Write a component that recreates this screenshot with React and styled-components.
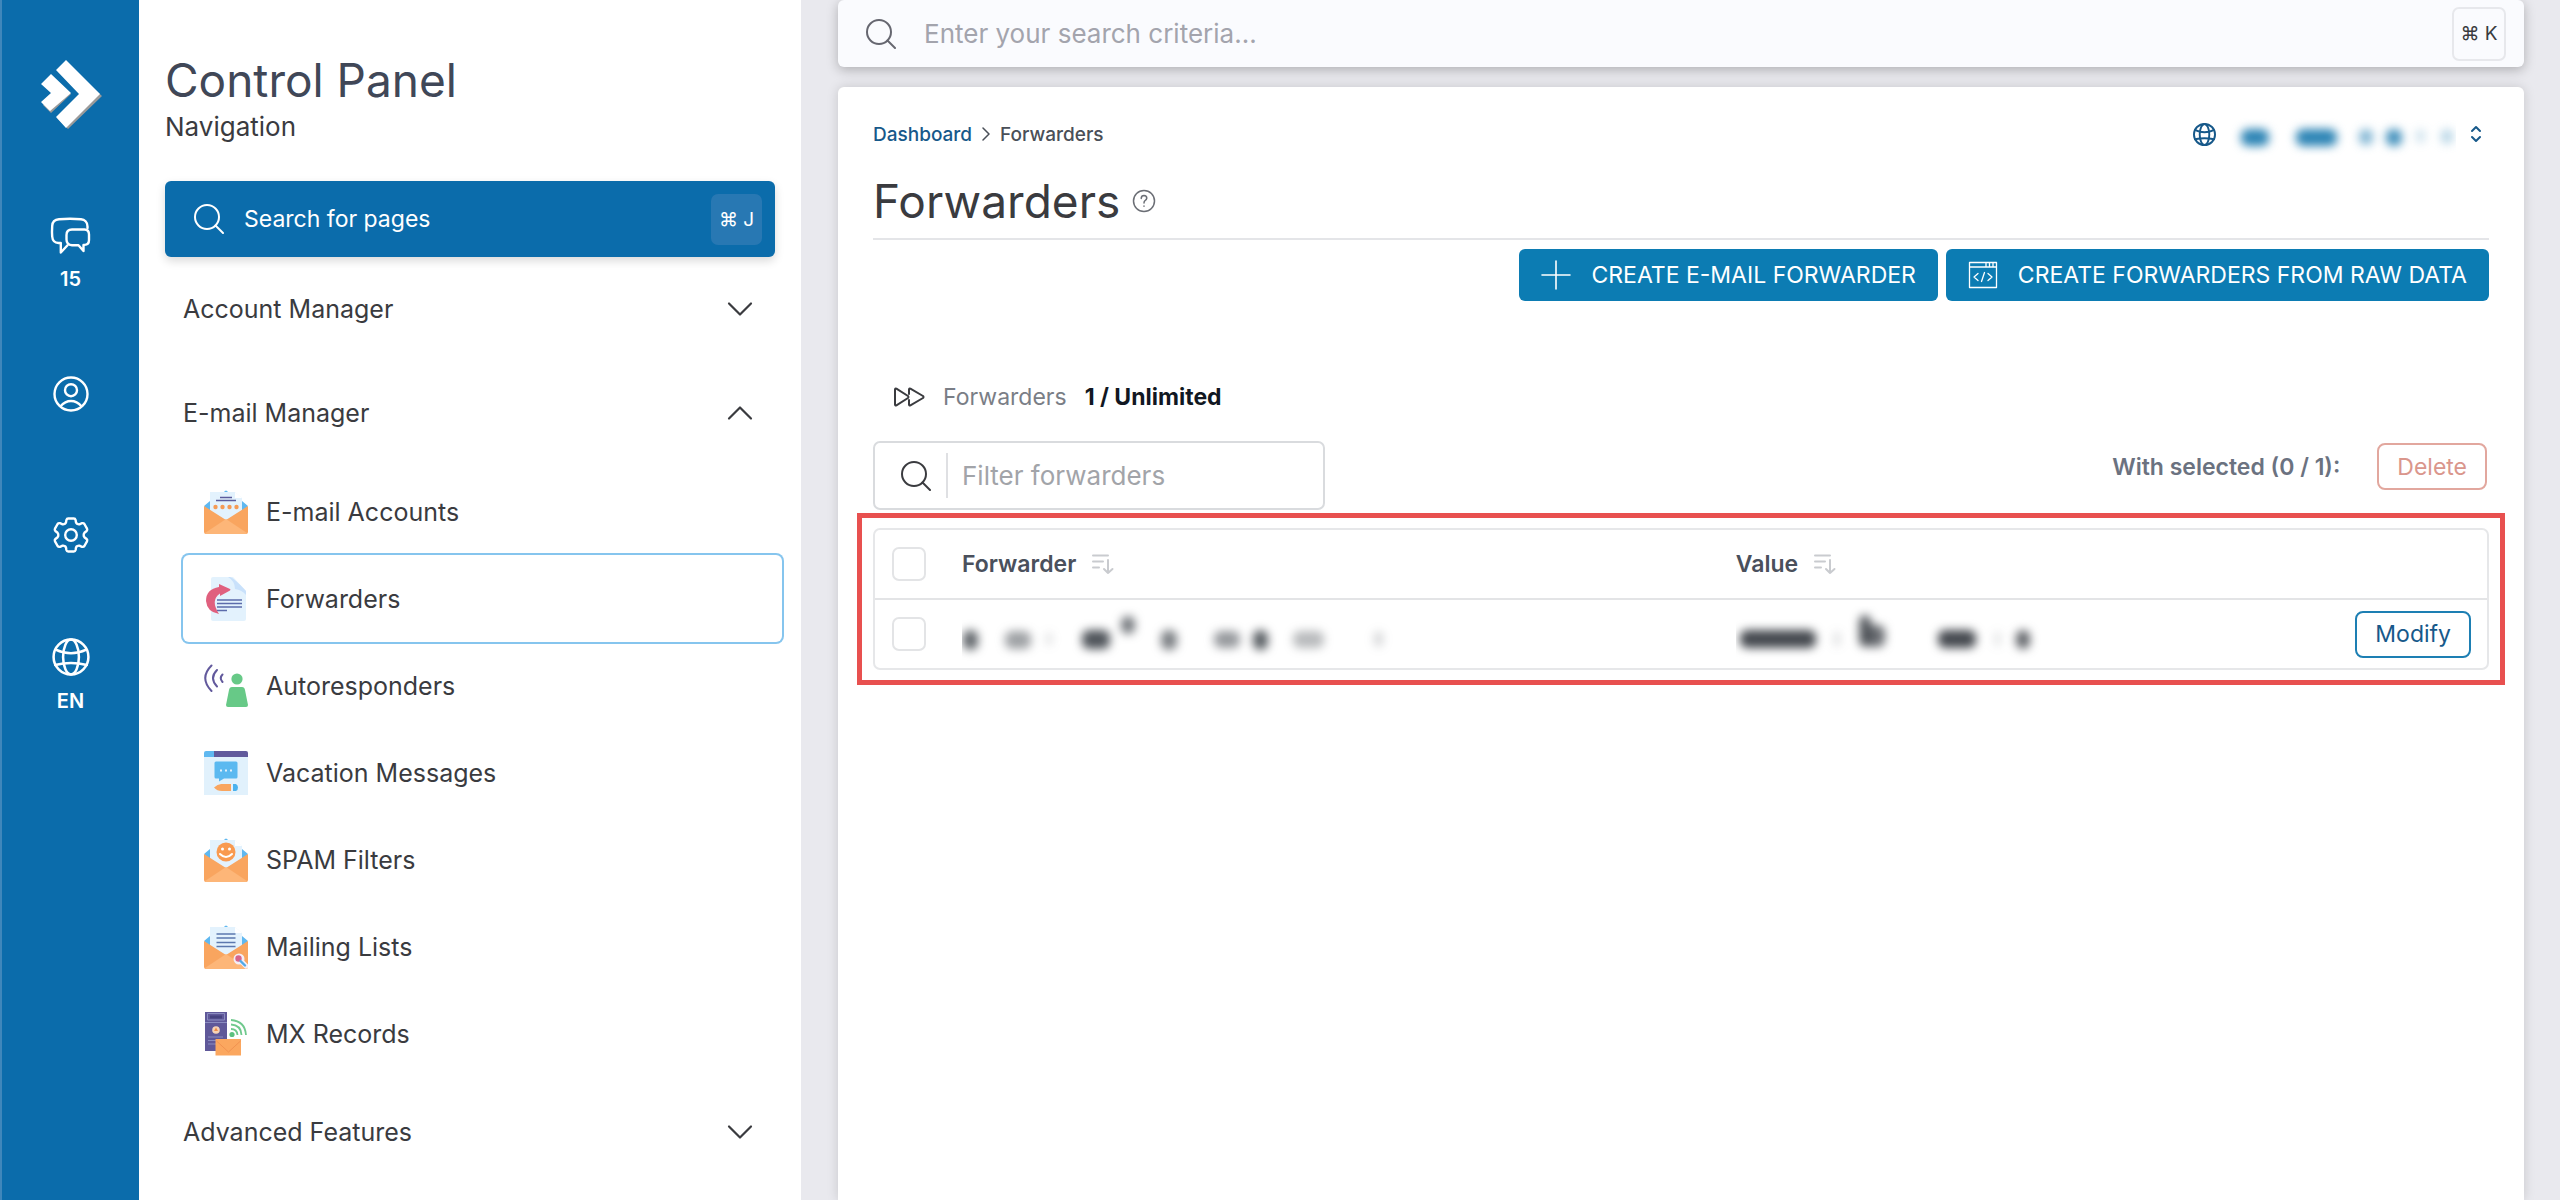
import React, { useState } from 'react'
import styled, { createGlobalStyle } from 'styled-components'

const GlobalStyle = createGlobalStyle`
    * {
        box-sizing: border-box;
    }

    body {
        margin: 0;
        background: #e9e9ee;
        color: #3a3b3f;
        font-family: Inter, 'Open Sans', sans-serif;
        font-size: 23px;
    }

    button, input {
        font-family: inherit;
        font-size: inherit;
        color: inherit;
    }

    button {
        padding: 0;
        border: none;
        background: none;
        cursor: pointer;
    }

    a {
        color: inherit;
        text-decoration: none;
    }

    svg {
        display: block;
        flex: none;
    }
`

// line icons

const Line = ({ size = 30, width, height, box = '0 0 30 30', stroke = 2, children }) => (
    <svg width={width || size} height={height || size} viewBox={box} fill="none" stroke="currentColor"
        strokeWidth={stroke} strokeLinecap="round" strokeLinejoin="round" aria-hidden="true">
        {children}
    </svg>
)

const SearchIcon = () => (
    <Line>
        <circle cx="13" cy="13" r="12" />
        <path d="M21.5 21.5L29 29" />
    </Line>
)

const GlobeIcon = ({ size, stroke }) => (
    <Line size={size} stroke={stroke} box="0 0 36 36">
        <circle cx="18" cy="18" r="16.5" />
        <ellipse cx="18" cy="18" rx="7.5" ry="16.5" />
        <path d="M3.5 11Q18 18 32.5 11M3 25.5Q18 22 33 25.5" />
    </Line>
)

const ChatIcon = () => (
    <Line width={42} height={38} box="0 0 42 38" stroke="2.4">
        <path d="M37.5 12V10.5C37.5 6 34.5 3.6 31 3.3Q20 2.3 9 3.3C5 3.6 2.4 6 2.2 10Q1.8 16 2.2 20.5C2.5 24.5 5 26.8 8.5 27H10.8V36.5L17.5 29.3" />
        <path d="M22 13.5H34.5C37.6 13.5 39 15.5 39 18.5V24C39 27 37.6 28.7 34.5 28.9H33.5V35L28.5 29.3H22C18.5 29 16.5 27 16.5 23.5V19C16.5 15.5 18.5 13.5 22 13.5Z" />
    </Line>
)

const UserIcon = () => (
    <Line size={36} box="0 0 36 36" stroke="2.4">
        <circle cx="18" cy="18" r="16.5" />
        <circle cx="18" cy="14.2" r="6" />
        <path d="M7.5 30.2Q12 25 18 25T28.5 30.2" />
    </Line>
)

const GearIcon = () => (
    <Line size={38} box="-19 -19 38 38" stroke="2.4">
        <path d="M-2.8 -16.5H2.8Q4.2 -16.5 4.6 -15L5 -12.6Q5.3 -11.6 6.2 -11.2Q7.4 -10.4 8.4 -10.7L11 -11.8Q12.6 -12.2 13.4 -11L16 -6.4Q16.7 -5 15.6 -4L13.4 -2.2Q12.6 -1.4 12.7 0Q12.6 1.4 13.4 2.2L15.6 4Q16.7 5 16 6.4L13.4 11Q12.6 12.2 11 11.8L8.4 10.7Q7.4 10.4 6.2 11.2Q5.3 11.6 5 12.6L4.6 15Q4.2 16.5 2.8 16.5H-2.8Q-4.2 16.5 -4.6 15L-5 12.6Q-5.3 11.6 -6.2 11.2Q-7.4 10.4 -8.4 10.7L-11 11.8Q-12.6 12.2 -13.4 11L-16 6.4Q-16.7 5 -15.6 4L-13.4 2.2Q-12.6 1.4 -12.7 0Q-12.6 -1.4 -13.4 -2.2L-15.6 -4Q-16.7 -5 -16 -6.4L-13.4 -11Q-12.6 -12.2 -11 -11.8L-8.4 -10.7Q-7.4 -10.4 -6.2 -11.2Q-5.3 -11.6 -5 -12.6L-4.6 -15Q-4.2 -16.5 -2.8 -16.5Z" />
        <circle r="5.8" />
    </Line>
)

const Chevron = ({ up }) => (
    <Line width={26} height={16} box="0 0 26 16" stroke="2.2">
        <path d={up ? 'M2 13.5L13 2.5L24 13.5' : 'M2 2.5L13 13.5L24 2.5'} />
    </Line>
)

const SortIcon = () => (
    <Line width={24} height={22} box="0 0 24 22" stroke="2">
        <path d="M2 2.5H17M2 8.5H12M2 14.5H8M17 7V20M13 16L17 20L21.5 16" />
    </Line>
)

const FastForwardIcon = () => (
    <Line width={32} height={20} box="0 0 32 20" stroke="2">
        <path d="M2 2.5Q2 1 3.4 1.7L15 9Q16 10 15 11L3.4 18.3Q2 19 2 17.5Z" />
        <path d="M16 7V2.5Q16 1 17.4 1.7L30 9Q31 10 30 11L17.4 18.3Q16 19 16 17.5V13" />
    </Line>
)

const PlusIcon = () => (
    <Line size={30} stroke="1.6">
        <path d="M15 1V29M1 15H29" />
    </Line>
)

const CodeIcon = () => (
    <Line size={30} stroke="1.3">
        <path d="M1.5 2.5H28.5V27.5H1.5ZM1.5 7H28.5M18 2.5V7M21.5 2.5V7M25 2.5V7M10 13.5L6 17L10 20.5M20 13.5L24 17L20 20.5M16.5 12.5L13.5 21.5" />
    </Line>
)

const HelpIcon = () => (
    <Line size={24} box="0 0 24 24" stroke="1.5">
        <circle cx="12" cy="12" r="10.5" />
        <path d="M9.2 9.4Q9.4 6.6 12 6.6Q14.8 6.8 14.8 9.2Q14.6 10.8 13 11.6Q12 12.2 12 14M12 17V17.2" />
    </Line>
)

const Logo = () => (
    <svg width="62" height="72" viewBox="0 0 62 72" aria-hidden="true">
        <g fill="#9a9a9a">
            <path d="M26 4L62 37L28 70L17 59L41 37Z" />
            <path d="M12 17L31 35L11 54L3 46L12 37Z" />
        </g>
        <g fill="#fff">
            <path d="M26 1L60 35L26 69L16 58L39 35L16 11Z" />
            <path d="M11 15L31 34L10 52L1 43L11 34L1 25Z" />
        </g>
    </svg>
)

// coloured menu icons

const Art = ({ children }) => (
    <svg width="44" height="44" viewBox="0 0 44 44" aria-hidden="true">{children}</svg>
)

const Envelope = ({ children }) => (
    <Art>
        <path d="M20 2Q22 -1 24 2ZM0 16L6 11V22ZM44 16L38 11V22Z" fill="#5fb8f0" />
        <path d="M6 2H31L38 8V24L22 34L6 24Z" fill="#e3f2fd" />
        <path d="M31 2V8H38Z" fill="#fff" />
        <path d="M0 16L22 30L44 16V42Q44 44 42 44H2Q0 44 0 42Z" fill="#f9a55f" />
        <path d="M1 43L22 29L43 43Q43 44 42 44H2Z" fill="#fdb678" />
        {children}
    </Art>
)

const AccountsArt = () => (
    <Envelope>
        <path d="M16 7.5H28M12 10.5H32" stroke="#5c5c9c" strokeWidth="1.3" />
        <g fill="#f59a55">
            <circle cx="11.5" cy="17" r="2.2" /><circle cx="18.5" cy="17" r="2.2" />
            <circle cx="25.5" cy="17" r="2.2" /><circle cx="32.5" cy="17" r="2.2" />
        </g>
    </Envelope>
)

const ForwardersArt = () => (
    <Art>
        <path d="M9 0H29L42 14V42Q42 44 40 44H9Q7 44 7 42V2Q7 0 9 0Z" fill="#e3f2fd" />
        <path d="M26 0Q30 1 42 14V18Q38 13 31 12Q31 4 24 0Z" fill="#c9e1fb" />
        <path d="M13 23H38M13 26.5H38M13 30H38M13 33.5H23" stroke="#5c6cab" strokeWidth="1.3" />
        <path d="M15 7L26 12Q27 12.6 26 13.4L16 19V16.5Q6 23 15 37Q3 35 2 24Q2 12 15 10Z" fill="#e0607e" />
    </Art>
)

const AutorespondersArt = () => (
    <Art>
        <path d="M7.5 1.5Q-5 14 7.5 27M13 6Q5 14 13 22.5M18.5 10.5Q15 14 18.5 18" fill="none" stroke="#62599c" strokeWidth="2" strokeLinecap="round" />
        <circle cx="33" cy="15" r="5.6" fill="#67c987" />
        <path d="M28 23H38Q40.5 23 41 26L44 41Q44 43 42 43H24Q22 43 22 41L25 26Q25.5 23 28 23Z" fill="#67c987" />
    </Art>
)

const VacationArt = () => (
    <Art>
        <path d="M0 6H44V44H0Z" fill="#e1f1fc" />
        <path d="M0 2Q0 0 2 0H11V6H0Z" fill="#5fb8f0" />
        <path d="M10 0H42Q44 0 44 2V6H10Z" fill="#615a9c" />
        <path d="M12 10.5H32Q33.5 10.5 33.5 12V26Q33.5 27.5 32 27.5H20L15 30.5V27.5H12Q10.5 27.5 10.5 26V12Q10.5 10.5 12 10.5Z" fill="#5bb9f0" />
        <path d="M16 19.5H18M21 19.5H23M26 19.5H28" stroke="#e1f1fc" strokeWidth="2" />
        <path d="M10 36.5Q14 32.5 18 33H27V40H18Q13 40 10 36.5Z" fill="#f9a55f" />
        <path d="M29 33H32Q34 34 34 36.5T32 40H29Z" fill="#4bb2ee" />
    </Art>
)

const SpamArt = () => (
    <Envelope>
        <circle cx="22" cy="14" r="9.5" fill="#f99a50" />
        <path d="M16 16Q22 22 28 16" fill="none" stroke="#fff" strokeWidth="2" strokeLinecap="round" />
        <circle cx="18.5" cy="11" r="1.5" fill="#fff" />
        <circle cx="25.5" cy="11" r="1.5" fill="#fff" />
    </Envelope>
)

const MailingArt = () => (
    <Envelope>
        <path d="M12.5 9H31.5M12.5 13H31.5M12.5 17.5H31.5M12.5 21.5H31.5" stroke="#5c78ae" strokeWidth="1.5" />
        <circle cx="35" cy="34" r="5.5" fill="#f3eef6" />
        <path d="M37 36L42 41" stroke="#f3eef6" strokeWidth="5" strokeLinecap="round" />
        <circle cx="34.5" cy="33.5" r="3.2" fill="#d7658a" />
        <path d="M36.5 36L41 40.5" stroke="#4fa9e8" strokeWidth="2.4" strokeLinecap="round" />
    </Envelope>
)

const RecordsArt = () => (
    <Art>
        <path d="M1 0H23V39H1Z" fill="#5f5899" />
        <path d="M3.5 1.5H20.5V8H3.5ZM1 10.5H23M4 25H19M4 28.5H12M4 32H12" fill="none" stroke="#8a8cc0" />
        <path d="M6 3.5H18V6.5H6Z" fill="#45427f" />
        <circle cx="12" cy="18" r="3.8" fill="#f6d2b5" />
        <path d="M12 15.5L14 19H10Z" fill="#f08c49" />
        <path d="M27 17Q33 17 33.5 23M27 12.5Q37 13 37.5 23M27 8Q41 9 42 23" fill="none" stroke="#6fc98d" strokeWidth="1.8" />
        <circle cx="28" cy="22.5" r="2.6" fill="#5cc07f" />
        <path d="M11.5 27H37V43.5H11.5Z" fill="#fba75f" />
        <path d="M12.5 29L24.5 40L36.5 29" fill="none" stroke="#f29250" />
    </Art>
)

const sections = [
    { title: 'Account Manager', pages: [] },
    {
        title: 'E-mail Manager',
        pages: [
            { name: 'E-mail Accounts', Icon: AccountsArt },
            { name: 'Forwarders', Icon: ForwardersArt },
            { name: 'Autoresponders', Icon: AutorespondersArt },
            { name: 'Vacation Messages', Icon: VacationArt },
            { name: 'SPAM Filters', Icon: SpamArt },
            { name: 'Mailing Lists', Icon: MailingArt },
            { name: 'MX Records', Icon: RecordsArt },
        ],
    },
    { title: 'Advanced Features', pages: [] },
]

// private values are smudged out: [x, y, width, height, opacity]
const domainMarks = [[11, 23, 28, 17, 1], [66, 23, 41, 17, 1], [129, 23, 14, 16, 0.6], [156, 23, 16, 17, 0.9], [186, 23, 9, 14, 0.25], [211, 23, 12, 15, 0.35]]
const forwarderMarks = [[1, 24, 15, 20, 0.9], [43, 25, 26, 18, 0.55], [84, 26, 6, 14, 0.2], [120, 24, 28, 19, 1], [159, 10, 14, 18, 0.8], [199, 24, 16, 20, 0.75], [252, 25, 26, 17, 0.6], [291, 24, 15, 20, 0.95], [331, 25, 31, 17, 0.4], [412, 25, 9, 16, 0.25]]
const valueMarks = [[4, 24, 76, 18, 1], [98, 25, 6, 16, 0.2], [123, 9, 12, 32, 0.9], [129, 19, 20, 22, 0.8], [202, 24, 38, 18, 1], [259, 25, 5, 16, 0.2], [280, 24, 14, 19, 0.85]]

const Smudge = ({ marks, width, color }) => (
    <svg width={width} height="56" viewBox={`0 0 ${width} 56`} aria-hidden="true">
        <g fill={color} style={{ filter: 'blur(5px)' }}>
            {marks.map(([x, y, w, h, o]) => (
                <rect key={`${x}-${y}`} x={x} y={y} width={w} height={h} rx="7" opacity={o} />
            ))}
        </g>
    </svg>
)

const App = () => {
    const [open, setOpen] = useState('E-mail Manager')

    return (
        <Page>
            <GlobalStyle />
            <Rail>
                <a href="#home" aria-label="Home"><Logo /></a>
                <RailNav>
                    <RailButton aria-label="Messages, 15"><ChatIcon />15</RailButton>
                    <RailButton aria-label="Account" $last><UserIcon /></RailButton>
                    <RailButton aria-label="Settings"><GearIcon /></RailButton>
                    <RailButton aria-label="Language, EN"><GlobeIcon size={38} stroke="2.4" />EN</RailButton>
                </RailNav>
            </Rail>

            <Sidebar>
                <PanelTitle>Control Panel</PanelTitle>
                <PanelSubtitle>Navigation</PanelSubtitle>
                <PageSearch>
                    <SearchIcon />
                    <span>Search for pages</span>
                    <PageKey>⌘ J</PageKey>
                </PageSearch>
                <nav>
                    {sections.map(section => (
                        <Section
                            key={section.title}
                            {...section}
                            open={open === section.title}
                            onToggle={() => setOpen(open === section.title ? null : section.title)}
                        />
                    ))}
                </nav>
            </Sidebar>

            <Main>
                <TopSearch>
                    <SearchIcon />
                    <TopInput type="search" aria-label="Search" placeholder="Enter your search criteria..." />
                    <TopKey>⌘ K</TopKey>
                </TopSearch>
                <Card>
                    <CrumbRow>
                        <Crumbs aria-label="Breadcrumb">
                            <CrumbLink href="#dashboard">Dashboard</CrumbLink>
                            <Line width={8} height={16} box="0 0 8 16" stroke="1.5"><path d="M1 2L7 8L1 14" /></Line>
                            <span>Forwarders</span>
                        </Crumbs>
                        <DomainButton aria-haspopup="listbox" aria-label="Select domain">
                            <GlobeIcon size={23} stroke="3" />
                            <Smudge marks={domainMarks} width={226} color="#2c84b5" />
                            <Line width={12} height={18} box="0 0 12 18" stroke="2"><path d="M2 6L6 2L10 6M2 12L6 16L10 12" /></Line>
                        </DomainButton>
                    </CrumbRow>
                    <Heading>
                        <Title>Forwarders</Title>
                        <HelpButton aria-label="Help"><HelpIcon /></HelpButton>
                    </Heading>
                    <Actions>
                        <PrimaryButton><PlusIcon />CREATE E-MAIL FORWARDER</PrimaryButton>
                        <PrimaryButton><CodeIcon />CREATE FORWARDERS FROM RAW DATA</PrimaryButton>
                    </Actions>
                    <Stats>
                        <FastForwardIcon />
                        <StatName>Forwarders</StatName>
                        <StatValue>1 / Unlimited</StatValue>
                    </Stats>
                    <Toolbar>
                        <Filter>
                            <FilterIcon><SearchIcon /></FilterIcon>
                            <FilterInput type="text" aria-label="Filter forwarders" placeholder="Filter forwarders" />
                        </Filter>
                        <Selected>
                            <SelectedText>With selected (0 / 1):</SelectedText>
                            <OutlineButton $color="#da968c" $border="#e2a79e">Delete</OutlineButton>
                        </Selected>
                    </Toolbar>
                    <Highlight>
                        <TableFrame>
                            <Table>
                                <thead>
                                    <tr>
                                        <CheckCell as="th"><Checkbox type="checkbox" aria-label="Select all" /></CheckCell>
                                        <HeadCell $width="48%"><HeadButton>Forwarder<SortIcon /></HeadButton></HeadCell>
                                        <HeadCell><HeadButton>Value<SortIcon /></HeadButton></HeadCell>
                                        <HeadCell $width="150px" aria-label="Actions" />
                                    </tr>
                                </thead>
                                <tbody>
                                    <tr>
                                        <CheckCell><Checkbox type="checkbox" aria-label="Select forwarder" /></CheckCell>
                                        <Cell><Smudge marks={forwarderMarks} width={440} color="#50555b" /></Cell>
                                        <Cell><Smudge marks={valueMarks} width={310} color="#45494f" /></Cell>
                                        <ActionCell><OutlineButton $color="#17598a" $border="#1d7fb3">Modify</OutlineButton></ActionCell>
                                    </tr>
                                </tbody>
                            </Table>
                        </TableFrame>
                    </Highlight>
                </Card>
            </Main>
        </Page>
    )
}

const Section = ({ title, pages, open, onToggle }) => (
    <>
        <SectionButton aria-expanded={open} onClick={onToggle}>
            {title}
            <Chevron up={open} />
        </SectionButton>
        {open && (
            <PageList>
                {pages.map(({ name, Icon }) => (
                    <li key={name}>
                        <PageLink href="#page" $active={name === 'Forwarders'}>
                            <Icon />
                            {name}
                        </PageLink>
                    </li>
                ))}
            </PageList>
        )}
    </>
)

const Page = styled.div`
    display: flex;
    min-height: 100vh;
`

const Rail = styled.aside`
    flex: none;
    width: 139px;
    padding-top: 59px;

    display: flex;
    flex-direction: column;
    align-items: center;

    background: #0b6cab;
    border-left: 2px solid #3f87bb;
    color: #fff;
`

const RailNav = styled.nav`
    margin-top: 85px;

    display: flex;
    flex-direction: column;
    align-items: center;
    gap: 84px;
`

const RailButton = styled.button`
    margin-bottom: ${props => props.$last ? '20px' : '0'};

    display: flex;
    flex-direction: column;
    align-items: center;
    gap: 12px;

    font-size: 20px;
    font-weight: 600;
    line-height: 26px;
`

const Sidebar = styled.aside`
    flex: none;
    width: 662px;
    padding: 52px 26px 0 26px;

    background: #fff;
`

const PanelTitle = styled.h2`
    margin: 0;

    color: #404757;
    font-size: 46px;
    font-weight: 400;
    line-height: 56px;
`

const PanelSubtitle = styled.div`
    margin-bottom: 35px;

    font-size: 26px;
    line-height: 38px;
`

const PageSearch = styled.button`
    width: 100%;
    height: 76px;
    padding: 0 13px 0 29px;

    display: flex;
    align-items: center;
    gap: 20px;

    background: #0b6cab;
    border-radius: 6px;
    box-shadow: 0 4px 10px rgba(0, 0, 0, 0.15);
    color: #fff;
`

const Key = styled.kbd`
    margin-left: auto;

    display: flex;
    align-items: center;
    justify-content: center;

    border-radius: 7px;
    font-family: inherit;
    font-size: 19px;
`

const PageKey = styled(Key)`
    width: 51px;
    height: 51px;
    background: #2878b3;
`

const TopKey = styled(Key)`
    width: 54px;
    height: 54px;
    border: 2px solid #e7e8ec;
    color: #3a3b3f;
`

const SectionButton = styled.button`
    width: 100%;
    height: 104px;
    padding: 0 22px 0 18px;

    display: flex;
    align-items: center;
    justify-content: space-between;

    font-size: 25px;
`

const PageList = styled.ul`
    margin: 0;
    padding: 3px 0 3px 18px;
    list-style: none;
`

const PageLink = styled.a`
    height: 87px;
    margin-right: -7px;
    padding-left: 21px;

    display: flex;
    align-items: center;
    gap: 18px;

    border-radius: 6px;
    box-shadow: ${props => props.$active ? '0 0 0 2px #86c5ee' : 'none'};
    font-size: 25px;
`

const Main = styled.main`
    flex: 1;
    min-width: 0;
    padding: 0 36px 0 37px;

    display: flex;
    flex-direction: column;
    gap: 20px;
`

const TopSearch = styled.div`
    height: 67px;
    padding: 0 18px 0 28px;

    display: flex;
    align-items: center;
    gap: 28px;

    background: #fafbfe;
    border-radius: 6px;
    box-shadow: 0 3px 12px rgba(0, 0, 0, 0.25);
    color: #666770;
`

const TopInput = styled.input`
    flex: 1;
    padding: 0;

    background: none;
    border: none;
    font-size: 26px;

    &::placeholder {
        color: #a3a4ad;
    }
`

const Card = styled.section`
    flex: 1;
    padding: 32px 35px;

    background: #fff;
    border-radius: 6px 6px 0 0;
    box-shadow: 0 0 12px rgba(0, 0, 0, 0.15);
`

const CrumbRow = styled.div`
    height: 30px;

    display: flex;
    align-items: center;
    justify-content: space-between;
`

const Crumbs = styled.nav`
    display: flex;
    align-items: center;
    gap: 10px;

    color: #4a4f58;
    font-size: 19px;
    font-weight: 500;
`

const CrumbLink = styled.a`
    color: #17598a;
`

const DomainButton = styled.button`
    padding-right: 7px;

    display: flex;
    align-items: center;
    gap: 14px;

    color: #17598a;
`

const Heading = styled.div`
    margin-top: 26px;
    padding-bottom: 11px;

    display: flex;
    align-items: center;
    gap: 12px;

    border-bottom: 2px solid #e4e5e8;
`

const Title = styled.h1`
    margin: 0;

    font-size: 46px;
    font-weight: 400;
    line-height: 52px;
`

const HelpButton = styled.button`
    color: #6b6e75;
`

const Actions = styled.div`
    margin-top: 9px;

    display: flex;
    justify-content: flex-end;
    gap: 8px;
`

const PrimaryButton = styled.button`
    height: 52px;
    padding: 0 22px;

    display: flex;
    align-items: center;
    gap: 20px;

    background: #0c7cb3;
    border-radius: 6px;
    color: #fff;
`

const Stats = styled.div`
    margin: 80px 0 28px 20px;
    height: 32px;

    display: flex;
    align-items: center;
    gap: 18px;
`

const StatName = styled.span`
    color: #7a7e86;
`

const StatValue = styled.strong`
    color: #111722;
    font-weight: 700;
`

const Toolbar = styled.div`
    display: flex;
    align-items: flex-start;
    justify-content: space-between;
`

const Filter = styled.div`
    width: 28%;
    height: 69px;
    padding: 10px 14px 10px 26px;

    display: flex;

    border: 2px solid #d9dbde;
    border-radius: 7px;
`

const FilterIcon = styled.div`
    padding-right: 15px;

    display: flex;
    align-items: center;

    border-right: 2px solid #dfe0e3;
`

const FilterInput = styled.input`
    flex: 1;
    min-width: 0;
    padding: 0 14px;

    background: none;
    border: none;
    font-size: 26px;

    &::placeholder {
        color: #a2a4a9;
    }
`

const Selected = styled.div`
    padding: 2px 2px 0 0;

    display: flex;
    align-items: center;
    gap: 37px;
`

const SelectedText = styled.span`
    color: #6b7280;
    font-weight: 600;
`

const OutlineButton = styled.button`
    height: 47px;
    padding: 0 18px;

    background: #fff;
    border: 2px solid ${props => props.$border};
    border-radius: 8px;
    color: ${props => props.$color};
`

const Highlight = styled.div`
    margin: 3px -16px 0 -16px;
    padding: 10px 11px;

    border: 5px solid #e8504f;
`

const TableFrame = styled.div`
    border: 2px solid #e6e7e9;
    border-radius: 7px;
`

const Table = styled.table`
    width: 100%;
    border-collapse: collapse;
    table-layout: fixed;

    tbody td {
        border-top: 2px solid #e3e4e6;
    }
`

const Cell = styled.td`
    height: 69px;
    padding: 0;
    text-align: left;
`

const CheckCell = styled(Cell)`
    width: 87px;
    padding-left: 17px;
`

const HeadCell = styled(Cell).attrs({ as: 'th' })`
    width: ${props => props.$width || 'auto'};
`

const ActionCell = styled(Cell)`
    padding-right: 16px;
    text-align: right;
`

const HeadButton = styled.button`
    display: flex;
    align-items: center;
    gap: 15px;

    color: #4a505c;
    font-weight: 600;

    svg {
        color: #c9cbcf;
    }
`

const Checkbox = styled.input`
    appearance: none;
    width: 34px;
    height: 34px;
    margin: 0;

    display: block;

    background: #fff;
    border: 2px solid #e3e4e6;
    border-radius: 7px;

    &:checked {
        background: #0c7cb3;
    }
`

export default App
